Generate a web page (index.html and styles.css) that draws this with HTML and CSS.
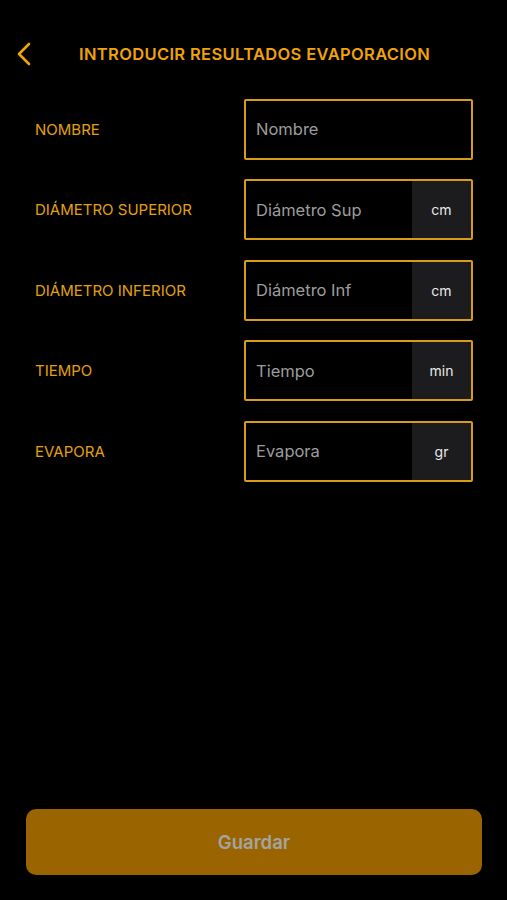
FILE: index.html
```html
<!DOCTYPE html>
<html lang="es">
<head>
  <meta charset="UTF-8">
  <meta name="viewport" content="width=device-width, initial-scale=1.0">
  <title>Introducir resultados evaporacion</title>
  <link rel="stylesheet" href="styles.css">
</head>
<body>

  <div class="screen">
    <header class="topbar">
      <a class="back" href="#">
        <svg width="16" height="24" viewBox="0 0 16 24">
          <path d="M13 2 L3 12 L13 22" fill="none" stroke="#f0a30a" stroke-width="2.6" stroke-linecap="round" stroke-linejoin="round"/>
        </svg>
      </a>
      <h1 class="title">INTRODUCIR RESULTADOS EVAPORACION</h1>
    </header>

    <form class="form">
      <div class="row">
        <label class="label">NOMBRE</label>
        <div class="field">
          <input type="text" placeholder="Nombre">
        </div>
      </div>
      <div class="row">
        <label class="label">DIÁMETRO SUPERIOR</label>
        <div class="field">
          <input type="text" placeholder="Diámetro Sup">
          <span class="unit">cm</span>
        </div>
      </div>
      <div class="row">
        <label class="label">DIÁMETRO INFERIOR</label>
        <div class="field">
          <input type="text" placeholder="Diámetro Inf">
          <span class="unit">cm</span>
        </div>
      </div>
      <div class="row">
        <label class="label">TIEMPO</label>
        <div class="field">
          <input type="text" placeholder="Tiempo">
          <span class="unit">min</span>
        </div>
      </div>
      <div class="row">
        <label class="label">EVAPORA</label>
        <div class="field">
          <input type="text" placeholder="Evapora">
          <span class="unit">gr</span>
        </div>
      </div>
    </form>

    <div class="footer">
      <button class="save" type="button">Guardar</button>
    </div>
  </div>

</body>
</html>
```

FILE: styles.css
```css
body {
  background-color: black;
  font-family: "Inter", "Roboto", sans-serif;
  margin: 0;
  padding: 0;
  color: white;
}

.screen {
  height: 900px;
  display: flex;
  flex-direction: column;
}

.topbar {
  display: flex;
  align-items: center;
  height: 34px;
  margin-top: 37px;
  padding-left: 16px;
}

.back {
  display: flex;
  width: 16px;
  height: 24px;
}

.title {
  margin: 0 0 0 47px;
  font-size: 16.5px;
  font-weight: 600;
  color: #f0a30a;
  letter-spacing: 0.35px;
}

.form {
  display: flex;
  flex-direction: column;
  gap: 20.5px;
  padding: 28px 34px 0 35px;
}

.row {
  display: flex;
  align-items: center;
  justify-content: space-between;
  height: 60px;
}

.label {
  font-size: 15px;
  color: #e5a00e;
}

.field {
  display: flex;
  width: 225px;
  height: 57px;
  border: 2px solid #d99b18;
  border-radius: 2px;
  overflow: hidden;
}

.field input {
  flex: 1;
  min-width: 0;
  background: black;
  border: none;
  outline: none;
  padding: 0 0 0 10px;
  font-family: inherit;
  font-size: 16.5px;
  color: white;
}

.field input::placeholder {
  color: #9d9d9d;
}

.unit {
  width: 59px;
  display: flex;
  align-items: center;
  justify-content: center;
  background-color: #1c1c1e;
  font-size: 14px;
  color: #e8e8e8;
}

.footer {
  margin-top: auto;
  padding: 0 25px 25px 26px;
}

.save {
  width: 100%;
  height: 66px;
  border: none;
  border-radius: 10px;
  background-color: #9a6400;
  font-family: inherit;
  font-size: 18.5px;
  font-weight: 600;
  color: #a4a4a4;
}
```
